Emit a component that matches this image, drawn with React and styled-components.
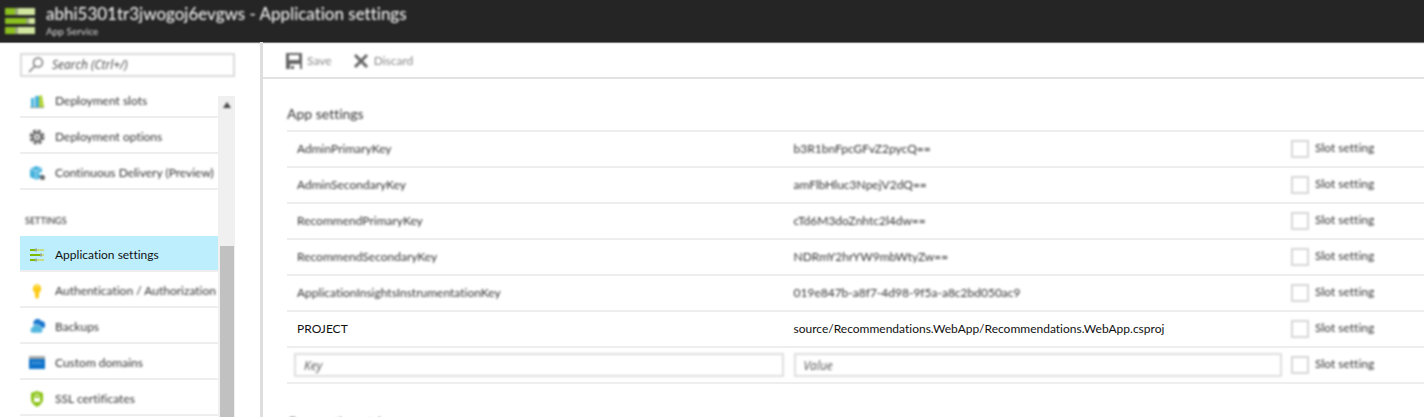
import React from "react";
import styled, { createGlobalStyle, css } from "styled-components";

const GlobalStyle = createGlobalStyle`
  *, *::before, *::after { box-sizing: border-box; }
  body {
    margin: 0;
    background: #fff;
    color: #222;
    font-family: Lato, "Open Sans", sans-serif;
    font-size: 12px;
    line-height: 16px;
    font-variant-ligatures: none;
  }
`;

const soft = css`
  filter: ${(p) => (p.$sharp ? "none" : "blur(1px)")};
`;

const Shell = styled.div`
  display: flex;
  flex-direction: column;
  height: 100vh;
  overflow: hidden;
`;

const Header = styled.header`
  display: flex;
  flex: none;
  align-items: flex-start;
  gap: 9px;
  height: 42px;
  padding: 4px 5px;
  background: #252525;
  box-shadow: 0 1px 1px #777;
  color: #fff;
  svg { margin-top: 3px; ${soft} }
`;

const Titles = styled.div`
  ${soft}
`;

const Title = styled.h1`
  margin: 0;
  font-size: 17px;
  font-weight: 400;
  line-height: 20px;
`;

const Subtitle = styled.div`
  color: #ddd;
  font-size: 10px;
  line-height: 14px;
`;

const Body = styled.div`
  display: flex;
  flex: 1;
  min-height: 0;
`;

const Sidebar = styled.aside`
  display: flex;
  flex: none;
  flex-direction: column;
  width: 263px;
  padding: 11px 25px 0 20px;
  border-right: 3px solid #dedede;
  overflow: hidden;
`;

const SearchBox = styled.label`
  display: flex;
  flex: none;
  align-items: center;
  gap: 8px;
  height: 24px;
  padding-left: 6px;
  border: 2px solid #dadada;
  ${soft}
`;

const SearchInput = styled.input`
  flex: 1;
  min-width: 0;
  padding: 0;
  border: 0;
  outline: 0;
  background: none;
  font: italic 12px/16px "Open Sans", sans-serif;
  &::placeholder { color: #444; opacity: 1; }
`;

const ListArea = styled.div`
  display: flex;
  flex: 1;
  min-height: 0;
  padding-top: 5px;
`;

const Nav = styled.nav`
  flex: 1;
  min-width: 0;
  overflow: hidden;
`;

const NavItem = styled.a`
  display: flex;
  align-items: center;
  gap: 10px;
  height: 36px;
  padding: 3px 0 0 9px;
  border-bottom: 2px solid #eee;
  background: ${(p) => (p.$active ? "#bdeefe" : "transparent")};
  color: ${(p) => (p.$active ? "#111" : "#333")};
  text-decoration: none;
  white-space: nowrap;
  svg { flex: none; }
  svg, span { ${soft} }
`;

const NavHeading = styled.h2`
  height: 46px;
  margin: 0;
  padding: 23px 0 0 5px;
  color: #222;
  font-size: 9px;
  font-weight: 400;
  ${soft}
`;

const ScrollTrack = styled.div`
  display: flex;
  flex: none;
  flex-direction: column;
  align-items: center;
  width: 17px;
  margin-top: 14px;
  background: #f0f0f0;
  svg { flex: none; margin-top: 6px; ${soft} }
`;

const ScrollThumb = styled.div`
  flex: 1;
  width: 14px;
  margin-top: 138px;
  background: #c1c1c1;
`;

const Main = styled.main`
  flex: 1;
  min-width: 0;
  overflow: hidden;
`;

const Toolbar = styled.div`
  display: flex;
  align-items: center;
  gap: 21px;
  height: 37px;
  padding: 3px 23px 0;
  border-bottom: 2px solid #e2e2e2;
`;

const ToolButton = styled.button`
  display: flex;
  align-items: center;
  gap: 5px;
  padding: 0;
  border: 0;
  background: none;
  color: #888;
  font: inherit;
  ${soft}
  svg { color: #666; }
`;

const Section = styled.section`
  padding: 25px 0 0 24px;
  & + & { padding-top: 28px; }
`;

const SectionTitle = styled.h2`
  height: 26px;
  margin: 0;
  color: #333;
  font-size: 14px;
  font-weight: 400;
  line-height: 20px;
  ${soft}
`;

const Table = styled.table`
  width: 100%;
  border-collapse: separate;
  border-spacing: 0;
  border-top: 2px solid #eee;
  table-layout: fixed;
`;

const SlotColumn = styled.col`
  width: 140px;
`;

const Cell = styled.td`
  height: 36px;
  padding: ${(p) => p.$pad || "0 2px 0 8px"};
  border-bottom: 2px solid #eee;
  color: ${(p) => (p.$sharp ? "#111" : "#333")};
  white-space: nowrap;
`;

const CellText = styled.span`
  ${soft}
  display: block;
`;

const TextField = styled.input`
  display: block;
  width: 100%;
  height: 24px;
  padding: 0 8px;
  border: 2px solid #dedede;
  outline: 0;
  font: italic 12px/16px "Open Sans", sans-serif;
  ${soft}
  &::placeholder { color: #555; opacity: 1; }
`;

const SlotLabel = styled.label`
  display: flex;
  align-items: center;
  gap: 6px;
  ${soft}
  span { padding-bottom: 2px; }
`;

const CheckBox = styled.input`
  width: 18px;
  height: 18px;
  margin: 0;
  border: 2px solid #d6d6d6;
  background: #fff;
  appearance: none;
  &:checked { background: #555; }
`;

const Icon = ({ size = 16, children }) => (
  <svg width={size} height={size} viewBox="0 0 16 16" aria-hidden="true">
    {children}
  </svg>
);

const SlotsIcon = () => (
  <Icon>
    <path d="M2 5h3v9H2zM6 3h4v11H6z" fill="#45b2dc" />
    <path d="M10 3l3-1 2 12h-5z" fill="#b3d335" />
    <path d="M1 14h14v1H1z" fill="#8a9a9a" />
  </Icon>
);

const GearIcon = () => (
  <Icon>
    <circle cx="8" cy="8" r="6" fill="none" stroke="#666" strokeWidth="3" strokeDasharray="3 1.71" />
    <circle cx="8" cy="8" r="4" fill="none" stroke="#666" strokeWidth="2" />
    <circle cx="8" cy="8" r="1.500" fill="#666" />
  </Icon>
);

const DeliveryIcon = () => (
  <Icon>
    <path d="M1 4l6-3 6 2v8l-5 4-7-3z" fill="#45b2dc" />
    <path d="M1 4l6 2 6-3M7 6v9" stroke="#b9e4f5" fill="none" />
    <path d="M10 7h3v3h-3z" fill="#e6f5fb" />
    <circle cx="13.500" cy="12.500" r="2.500" fill="#666" />
  </Icon>
);

const SlidersIcon = () => (
  <Icon>
    <path d="M1 3h14M1 8h14M1 13h14" stroke="#c5dc8b" strokeWidth="2" />
    <path d="M1 3h5M1 8h10M1 13h5" stroke="#7fba00" strokeWidth="2" />
    <path d="M7 1.500v3M12 6.500v3M7 11.500v3" stroke="#7a7a7a" />
  </Icon>
);

const KeyIcon = () => (
  <Icon>
    <path d="M8 1a5 5 0 0 1 2 9v4l-2 2-2-2v-4A5 5 0 0 1 8 1z" fill="#fccb16" />
    <circle cx="8" cy="3.500" r="1" fill="#fff3b0" />
  </Icon>
);

const BackupIcon = () => (
  <Icon>
    <path d="M5 6a4 4 0 0 1 7-4 4 4 0 0 1 3 7h-3z" fill="#1d79ce" />
    <path d="M3 14a3 3 0 0 1 0-5.500 4.500 4.500 0 0 1 8-1 3.500 3.500 0 0 1 1 6.500z" fill="#52b6de" stroke="#fff" strokeWidth=".6" />
  </Icon>
);

const DomainIcon = () => (
  <Icon>
    <path d="M0 1h16v3H0z" fill="#a9a9a9" />
    <path d="M0 4h16v10H0z" fill="#0f74cb" />
    <path d="M3 8h10" stroke="#5a9fdc" strokeWidth="2" strokeDasharray="2 1" />
  </Icon>
);

const ShieldIcon = () => (
  <Icon>
    <path d="M8 0l6 2v6c0 4-3 6-6 8-3-2-6-4-6-8V2z" fill="#8cc417" />
    <path d="M5 7h6v4H5z" fill="#fff" />
    <path d="M6 7V5.500a2 2 0 0 1 4 0V7" fill="none" stroke="#fff" />
  </Icon>
);

const AppIcon = () => (
  <svg width="32" height="28" viewBox="0 0 32 28" aria-hidden="true">
    <path d="M0 1h30v7H0zM0 11h30v6H0zM0 20h30v7H0z" fill="#d2e6a0" />
    <path d="M0 1h10v7H0zM0 11h21v6H0zM0 20h10v7H0z" fill="#8cc11f" />
    <path d="M10 1h3v7h-3zM21 11h3v6h-3zM10 20h3v7h-3z" fill="#98a77c" />
  </svg>
);

const SearchIcon = () => (
  <Icon>
    <circle cx="10" cy="5.500" r="4.500" fill="none" stroke="#777" strokeWidth="1.500" />
    <path d="M7 9l-6 6" stroke="#777" strokeWidth="1.500" />
  </Icon>
);

const SaveIcon = () => (
  <Icon>
    <path d="M0 0h16v16h-2v-5H4v5H0zM3 2v5h10V2z" fill="currentColor" fillRule="evenodd" />
    <path d="M5 13h3v3H5z" fill="currentColor" />
  </Icon>
);

const DiscardIcon = () => (
  <Icon>
    <path d="M2 2l12 12M14 2L2 14" stroke="currentColor" strokeWidth="3" />
  </Icon>
);

const deploymentItems = [
  { label: "Deployment slots", Glyph: SlotsIcon },
  { label: "Deployment options", Glyph: GearIcon },
  { label: "Continuous Delivery (Preview)", Glyph: DeliveryIcon },
];

const settingsItems = [
  { label: "Application settings", Glyph: SlidersIcon, active: true },
  { label: "Authentication / Authorization", Glyph: KeyIcon },
  { label: "Backups", Glyph: BackupIcon },
  { label: "Custom domains", Glyph: DomainIcon },
  { label: "SSL certificates", Glyph: ShieldIcon },
];

const settings = [
  { name: "AdminPrimaryKey", value: "b3R1bnFpcGFvZ2pycQ==" },
  { name: "AdminSecondaryKey", value: "amFlbHluc3NpejV2dQ==" },
  { name: "RecommendPrimaryKey", value: "cTd6M3doZnhtc2l4dw==" },
  { name: "RecommendSecondaryKey", value: "NDRmY2hrYW9mbWtyZw==" },
  { name: "ApplicationInsightsInstrumentationKey", value: "019e847b-a8f7-4d98-9f5a-a8c2bd050ac9" },
  { name: "PROJECT", value: "source/Recommendations.WebApp/Recommendations.WebApp.csproj", focus: true },
];

const NavList = ({ items }) =>
  items.map(({ label, Glyph, active }) => (
    <NavItem key={label} href="#" $active={active} $sharp={active} aria-current={active ? "page" : undefined}>
      <Glyph />
      <span>{label}</span>
    </NavItem>
  ));

const SlotCell = () => (
  <Cell $pad="0 0 0 7px">
    <SlotLabel>
      <CheckBox type="checkbox" />
      <span>Slot setting</span>
    </SlotLabel>
  </Cell>
);

export default function App() {
  return (
    <Shell>
      <GlobalStyle />
      <Header>
        <AppIcon />
        <Titles>
          <Title>abhi5301tr3jwogoj6evgws - Application settings</Title>
          <Subtitle>App Service</Subtitle>
        </Titles>
      </Header>
      <Body>
        <Sidebar>
          <SearchBox>
            <SearchIcon />
            <SearchInput type="text" placeholder="Search (Ctrl+/)" aria-label="Search" />
          </SearchBox>
          <ListArea>
            <Nav>
              <NavList items={deploymentItems} />
              <NavHeading>SETTINGS</NavHeading>
              <NavList items={settingsItems} />
            </Nav>
            <ScrollTrack>
              <svg width="8" height="6" viewBox="0 0 8 6" aria-hidden="true">
                <path d="M4 0l4 6H0z" fill="#444" />
              </svg>
              <ScrollThumb />
            </ScrollTrack>
          </ListArea>
        </Sidebar>
        <Main>
          <Toolbar>
            <ToolButton type="button"><SaveIcon />Save</ToolButton>
            <ToolButton type="button"><DiscardIcon />Discard</ToolButton>
          </Toolbar>
          <Section>
            <SectionTitle>App settings</SectionTitle>
            <Table>
              <colgroup>
                <col />
                <col />
                <SlotColumn />
              </colgroup>
              <tbody>
                {settings.map(({ name, value, focus }) => (
                  <tr key={name}>
                    <Cell $pad="0 0 0 10px" $sharp={focus}><CellText $sharp={focus}>{name}</CellText></Cell>
                    <Cell $sharp={focus}><CellText $sharp={focus}>{value}</CellText></Cell>
                    <SlotCell />
                  </tr>
                ))}
                <tr>
                  <Cell $pad="0 2px 0 7px"><TextField type="text" placeholder="Key" aria-label="Key" /></Cell>
                  <Cell><TextField type="text" placeholder="Value" aria-label="Value" /></Cell>
                  <SlotCell />
                </tr>
              </tbody>
            </Table>
          </Section>
          <Section>
            <SectionTitle>Connection strings</SectionTitle>
          </Section>
        </Main>
      </Body>
    </Shell>
  );
}
